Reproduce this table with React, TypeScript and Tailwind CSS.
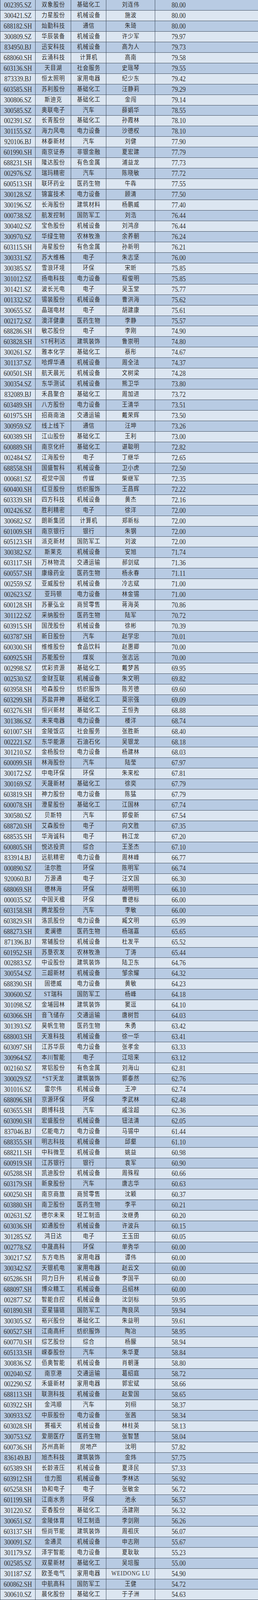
import React from 'react';

const raw = `002395.SZ|双象股份|基础化工|刘连伟|80.00
300421.SZ|力星股份|机械设备|施波|80.00
688182.SH|灿勤科技|通信|朱琦|80.00
300809.SZ|华辰装备|机械设备|许少军|79.97
834950.BJ|迅安科技|机械设备|高为人|79.73
688060.SH|云涌科技|计算机|高南|79.58
603136.SH|天目湖|社会服务|史瑶琴|79.55
873339.BJ|恒太照明|家用电器|纪少东|79.42
603585.SH|苏利股份|基础化工|汪静莉|79.29
300806.SZ|斯迪克|基础化工|金闯|79.14
300585.SZ|奥联电子|汽车|薛娟华|78.55
002391.SZ|长青股份|基础化工|孙霞林|78.10
301155.SZ|海力风电|电力设备|沙德权|78.10
920106.BJ|林泰新材|汽车|刘健|77.90
601990.SH|南京证券|非银金融|夏宏建|77.79
688231.SH|隆达股份|有色金属|浦益龙|77.73
002976.SZ|瑞玛精密|汽车|陈晓敏|77.72
600513.SH|联环药业|医药生物|牛犇|77.55
300128.SZ|锦富技术|电力设备|顾清|77.50
300196.SZ|长海股份|建筑材料|杨鹏威|77.40
000738.SZ|航发控制|国防军工|刘浩|76.44
300402.SZ|宝色股份|机械设备|刘鸿彦|76.44
300970.SZ|华绿生物|农林牧渔|余养朝|76.24
603115.SH|海星股份|有色金属|孙新明|76.21
300331.SZ|苏大维格|电子|朱志坚|76.00
300385.SZ|雪浪环境|环保|宋昕|75.85
301012.SZ|扬电科技|电力设备|程俊明|75.85
301421.SZ|波长光电|电子|吴玉堂|75.77
001332.SZ|锡装股份|机械设备|曹洪海|75.62
300655.SZ|晶瑞电材|电子|胡建康|75.61
002172.SZ|澳洋健康|医药生物|李静|75.57
688286.SH|敏芯股份|电子|李刚|74.90
603828.SH|ST柯利达|建筑装饰|鲁崇明|74.80
300261.SZ|雅本化学|基础化工|蔡彤|74.67
301137.SZ|哈焊华通|机械设备|周全法|74.37
600501.SH|航天晨光|机械设备|文树梁|74.28
300354.SZ|东华测试|机械设备|熊卫华|73.80
832089.BJ|禾昌聚合|基础化工|周加进|73.72
603489.SH|八方股份|电力设备|王清华|73.51
601975.SH|招商南油|交通运输|戴荣辉|73.50
300959.SZ|线上线下|通信|汪坤|73.26
600389.SH|江山股份|基础化工|王利|73.00
600889.SH|南京化纤|基础化工|谌聪明|72.82
002484.SZ|江海股份|电子|丁继华|72.65
688558.SH|国盛智科|机械设备|卫小虎|72.50
000681.SZ|视觉中国|传媒|柴继军|72.35
600400.SH|红豆股份|纺织服饰|王昌辉|72.22
603339.SH|四方科技|机械设备|黄杰|72.16
002426.SZ|胜利精密|电子|徐洋|72.00
300682.SZ|朗新集团|计算机|郑新标|72.00
601009.SH|南京银行|银行|朱钢|72.00
605123.SH|派克新材|国防军工|刘波|72.00
300382.SZ|斯莱克|机械设备|安旭|71.74
603117.SH|万林物流|交通运输|郝剑斌|71.36
600557.SH|康缘药业|医药生物|杨永春|71.11
002559.SZ|亚威股份|机械设备|冷志斌|71.00
002623.SZ|亚玛顿|电力设备|林金锡|71.00
600128.SH|苏豪弘业|商贸零售|蒋海英|70.86
301122.SZ|采纳股份|医药生物|陆军|70.72
603915.SH|国茂股份|机械设备|徐彬|70.39
603787.SH|新日股份|汽车|赵学忠|70.01
600300.SH|维维股份|食品饮料|赵惠卿|70.00
600925.SH|苏能股份|煤炭|张志远|70.00
002998.SZ|优彩资源|基础化工|戴梦茜|69.95
002530.SZ|金财互联|机械设备|朱文明|69.82
603958.SH|哈森股份|纺织服饰|陈芳德|69.60
603299.SH|苏盐井神|基础化工|莫宗强|69.09
603276.SH|恒兴新材|基础化工|王恒秀|68.88
301386.SZ|未来电器|电力设备|楼洋|68.74
601007.SH|金陵饭店|社会服务|张胜新|68.40
002221.SZ|东华能源|石油石化|吴银龙|68.18
301210.SZ|金杨股份|电力设备|杨建林|68.03
600099.SH|林海股份|汽车|陆莹|67.97
300172.SZ|中电环保|环保|朱来松|67.81
300169.SZ|天晟新材|基础化工|徐奕|67.79
603819.SH|神力股份|电力设备|陈猛|67.79
600078.SH|澄星股份|基础化工|江国林|67.74
300580.SZ|贝斯特|汽车|郭俊新|67.54
688720.SH|艾森股份|电子|向文胜|67.35
688535.SH|华海诚科|电子|韩江龙|67.20
600805.SH|悦达投资|综合|王圣杰|67.10
833914.BJ|远航精密|电力设备|周林峰|66.77
000890.SZ|法尔胜|环保|陈明军|66.74
920060.BJ|万源通|电子|汪文国|66.30
688069.SH|德林海|环保|胡明明|66.10
000035.SZ|中国天楹|环保|曹德标|66.00
603158.SH|腾龙股份|汽车|李敏|66.00
603829.SH|洛凯股份|电力设备|臧文明|65.99
688273.SH|麦澜德|医药生物|杨瑞嘉|65.65
871396.BJ|常辅股份|机械设备|杜发平|65.52
601952.SH|苏垦农发|农林牧渔|丁涛|65.44
002883.SZ|中设股份|建筑装饰|陆卫东|64.76
300554.SZ|三超新材|机械设备|邹余耀|64.32
688390.SH|固德威|电力设备|黄敏|64.23
300600.SZ|ST瑞科|国防军工|杨峰|64.18
301098.SZ|金埔园林|建筑装饰|窦逗|64.10
603066.SH|音飞储存|交通运输|唐树哲|64.03
301393.SZ|昊帆生物|医药生物|朱勇|63.42
688003.SH|天准科技|机械设备|徐一华|63.41
603097.SH|江苏华辰|电力设备|张孝金|63.33
300964.SZ|本川智能|电子|江培来|63.12
002160.SZ|常铝股份|有色金属|刘海山|62.81
300029.SZ|*ST天龙|建筑装饰|郭泰然|62.76
301016.SZ|雷尔伟|机械设备|王冲|62.74
688096.SH|京源环保|环保|李武林|62.48
603655.SH|朗博科技|汽车|戚淦超|62.36
603090.SH|宏盛股份|机械设备|钮法清|62.05
837046.BJ|亿能电力|电力设备|马锡中|61.44
688355.SH|明志科技|机械设备|邱壑|61.10
688211.SH|中科微至|机械设备|姚益|60.98
600919.SH|江苏银行|银行|袁军|60.90
605288.SH|凯迪股份|机械设备|周殊程|60.66
603179.SH|新泉股份|汽车|唐志华|60.63
600250.SH|南京商旅|商贸零售|沈颖|60.37
603880.SH|南卫股份|医药生物|李平|60.21
002631.SZ|德尔未来|轻工制造|汝继勇|60.20
603036.SH|如通股份|机械设备|许波兵|60.15
301285.SZ|鸿日达|电子|王玉田|60.05
002778.SZ|中晟高科|环保|单秀华|60.00
300217.SZ|东方电热|家用电器|谭伟|60.00
300342.SZ|天银机电|家用电器|赵云文|60.00
605286.SH|同力日升|机械设备|李国平|60.00
688097.SH|博众精工|机械设备|吕绍林|60.00
002877.SZ|智能自控|机械设备|沈剑标|59.95
601890.SH|亚星锚链|国防军工|陶良凤|59.94
300305.SZ|裕兴股份|基础化工|朱益明|59.61
600527.SH|江南高纤|纺织服饰|陶冶|58.95
600770.SH|综艺股份|综合|杨朦|58.94
605133.SH|嵘泰股份|汽车|朱华夏|58.84
300836.SZ|佰奥智能|机械设备|肖朝蓬|58.80
002040.SZ|南京港|交通运输|葛绍庭|58.72
002290.SZ|禾盛新材|家用电器|郭宏斌|58.66
688113.SH|联测科技|机械设备|赵爱国|58.65
603922.SH|金鸿顺|汽车|刘栩|58.37
300933.SZ|中辰股份|电力设备|张茜|58.34
603028.SH|赛福天|机械设备|林柱英|58.13
300753.SZ|爱朋医疗|医药生物|张智慧|58.04
600736.SH|苏州高新|房地产|沈明|57.82
836149.BJ|旭杰科技|建筑装饰|金炜|57.75
605389.SH|长龄液压|机械设备|夏泽民|57.33
603912.SH|佳力图|机械设备|李林达|56.92
605258.SH|协和电子|电子|张敏金|56.72
601199.SH|江南水务|环保|池永|56.57
301220.SZ|亚香股份|基础化工|汤建刚|56.32
300651.SZ|金陵体育|轻工制造|李剑刚|56.26
603137.SH|恒尚节能|建筑装饰|周祖庆|56.07
300091.SZ|金通灵|机械设备|申志刚|55.67
301179.SZ|泽宇智能|电力设备|夏耿耿|55.23
002585.SZ|双星新材|基础化工|吴培服|55.00
301187.SZ|欧圣电气|家用电器|WEIDONG LU|54.90
600862.SH|中航高科|国防军工|王健|54.72
300610.SZ|晨化股份|基础化工|于子洲|54.63
603332.SH|苏州龙杰|基础化工|邹凯东|54.50
301010.SZ|晶雪节能|建筑材料|贾富忠|54.00
688329.SH|艾隆科技|机械设备|徐立|53.91
300717.SZ|华信新材|基础化工|李振斌|53.65
688017.SH|绿的谐波|机械设备|张雨文|53.61
603212.SH|赛伍技术|电力设备|吴勉|53.60
603286.SH|日盈电子|汽车|陆鹏|53.14
603065.SH|宿迁联盛|基础化工|梁小龙|52.35
603928.SH|兴业股份|基础化工|王进兴|52.07
300715.SZ|凯伦股份|建筑材料|李忠人|52.00
301418.SZ|协昌科技|机械设备|顾挺|51.89
832802.BJ|保丽洁|环保|钱振清|51.70
603879.SH|永悦科技|基础化工|徐伟达|51.68
600746.SH|江苏索普|基础化工|陈志林|51.63
300721.SZ|怡达股份|基础化工|刘准|51.00
603389.SH|*ST亚振|轻工制造|高银楠|50.65
002808.SZ|*ST恒久|电子|余荣清|50.57
002796.SZ|世嘉科技|通信|韩惠明|50.42
301036.SZ|双乐股份|基础化工|潘向武|50.41
601008.SH|连云港|交通运输|李兵|50.28
301168.SZ|通灵股份|电力设备|李前进|50.24
002009.SZ|天奇股份|机械设备|黄斌|50.00
301125.SZ|腾亚精工|机械设备|徐家林|50.00
600105.SH|永鼎股份|通信|路庆海|50.00
603660.SH|苏州科达|计算机|陈卫东|50.00
832278.BJ|鹿得医疗|医药生物|项友亮|50.00
837006.BJ|晟楠科技|国防军工|吴国庆|50.00
301360.SZ|荣旗科技|机械设备|钱曙光|49.88
873665.BJ|科强股份|基础化工|殷海刚|49.75
839790.BJ|联迪信息|计算机|沈荣明|48.68
300936.SZ|中英科技|电子|俞卫忠|48.13
603359.SH|东珠生态|建筑装饰|席晨超|48.00
688588.SH|凌志软件|计算机|张宝泉|48.00
831641.BJ|格利尔|家用电器|朱婧|47.96
300670.SZ|大烨智能|电力设备|陈杰|47.93
688178.SH|万德斯|环保|陈灿|47.28
301378.SZ|通达海|计算机|郑建国|46.59
688103.SH|国力股份|电子|黄浩|46.25
300337.SZ|银邦股份|有色金属|沈健生|46.18
300165.SZ|ST天瑞|机械设备|应刚|45.94
872931.BJ|无锡鼎邦|机械设备|王凯|45.00
870299.BJ|灿能电力|电力设备|林宇|44.18
300031.SZ|宝通科技|传媒|包志方|43.36
301040.SZ|中环海陆|电力设备|吴剑|43.00
603307.SH|扬州金泉|纺织服饰|李宏庆|42.39
603125.SH|常青科技|基础化工|孙秋新|42.04
871263.BJ|莱赛激光|机械设备|陆建红|42.04`;

const rows = raw.split('\n').map((line) => line.split('|'));

const App: React.FC = () => {
  return (
    <div
      className="w-[660px] border-l border-[#3d4a5c] text-[#2e2e2e]"
      style={{ fontFamily: '"Liberation Serif", "Noto Sans CJK SC", serif' }}
    >
      {rows.map((cells, i) => (
        <div
          key={cells[0] + i}
          className={[
            'flex whitespace-nowrap border-b border-[#3d4a5c]',
            i % 20 === 10 ? 'h-[26px]' : 'h-[27px]',
            i % 2 === 0 ? 'bg-[#b8cbe3]' : 'bg-[#dce6f1]',
          ].join(' ')}
        >
          {/* code */}
          <div className="flex w-[90px] shrink-0 items-center justify-center border-r border-[#3d4a5c]">
            <span className="scale-y-[1.2] text-[16px] leading-none">{cells[0]}</span>
          </div>
          {/* name */}
          <div className="flex w-[91px] shrink-0 items-center justify-center border-r border-[#3d4a5c]">
            <span className="scale-y-[1.12] pl-[1px] text-[14px] leading-none tracking-[1px]">{cells[1]}</span>
          </div>
          {/* industry */}
          <div className="flex w-[90px] shrink-0 items-center justify-center border-r border-[#3d4a5c]">
            <span className="scale-y-[1.12] pl-[1px] text-[14px] leading-none tracking-[1px]">{cells[2]}</span>
          </div>
          {/* person */}
          <div className="flex w-[125px] shrink-0 items-center justify-center border-r border-[#3d4a5c]">
            <span className="scale-y-[1.12] pl-[1px] text-[14px] leading-none tracking-[1px]">{cells[3]}</span>
          </div>
          {/* value, sits left of the column middle as in the sheet */}
          <div className="flex flex-1 items-center">
            <span className="w-[120px] scale-y-[1.2] text-center text-[16px] leading-none">{cells[4]}</span>
          </div>
        </div>
      ))}
    </div>
  );
};

export default App;
